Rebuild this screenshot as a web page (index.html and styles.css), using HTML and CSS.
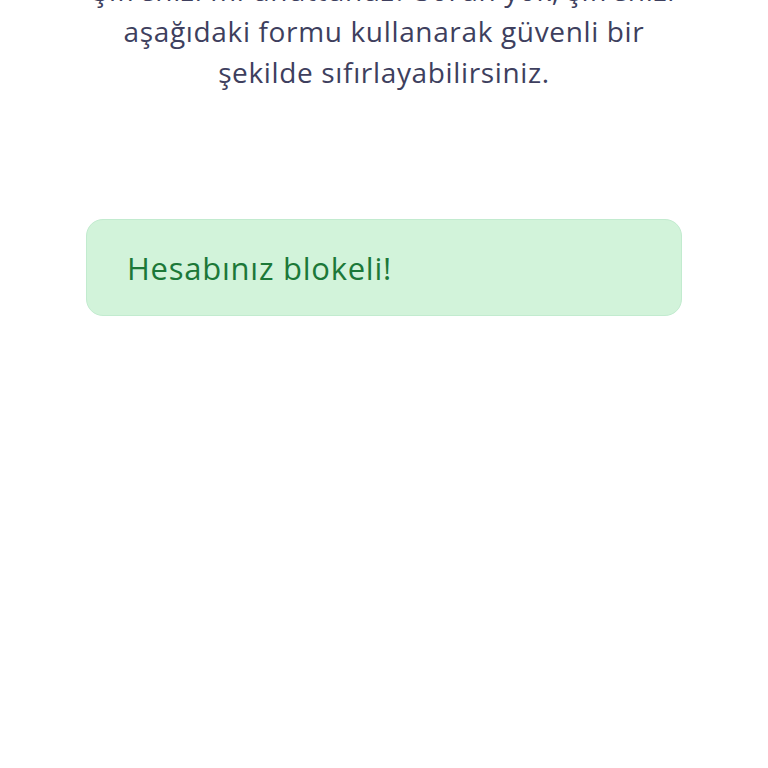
FILE: index.html
```html
<!DOCTYPE html>
<html lang="tr">
<head>
<meta charset="utf-8">
<title>Şifremi unuttum</title>
<link rel="stylesheet" href="styles.css">
</head>
<body>
<main class="page">
  <p class="intro">Şifrenizi mi unuttunuz? Sorun yok, şifrenizi<br>aşağıdaki formu kullanarak güvenli bir<br>şekilde sıfırlayabilirsiniz.</p>
  <div class="alert">Hesabınız blokeli!</div>
</main>
</body>
</html>
```
FILE: styles.css
```css
html, body {
  margin: 0;
  padding: 0;
  background: #ffffff;
}
body {
  font-family: "Open Sans", "Noto Sans", sans-serif;
}
.page {
  display: flex;
  flex-direction: column;
  align-items: center;
  padding: 0 86px;
}
.intro {
  margin: -30px -40px 0;
  text-align: center;
  font-size: 28px;
  letter-spacing: 0.65px;
  line-height: 41px;
  color: #3e3f5e;
}
.alert {
  box-sizing: border-box;
  align-self: stretch;
  margin-top: 126px;
  height: 97px;
  display: flex;
  align-items: center;
  padding: 0 40px;
  background: #d2f3da;
  border: 1px solid #c2ebcf;
  border-radius: 17px;
  color: #1c7838;
  font-size: 31px;
  letter-spacing: 0.75px;
}
```
